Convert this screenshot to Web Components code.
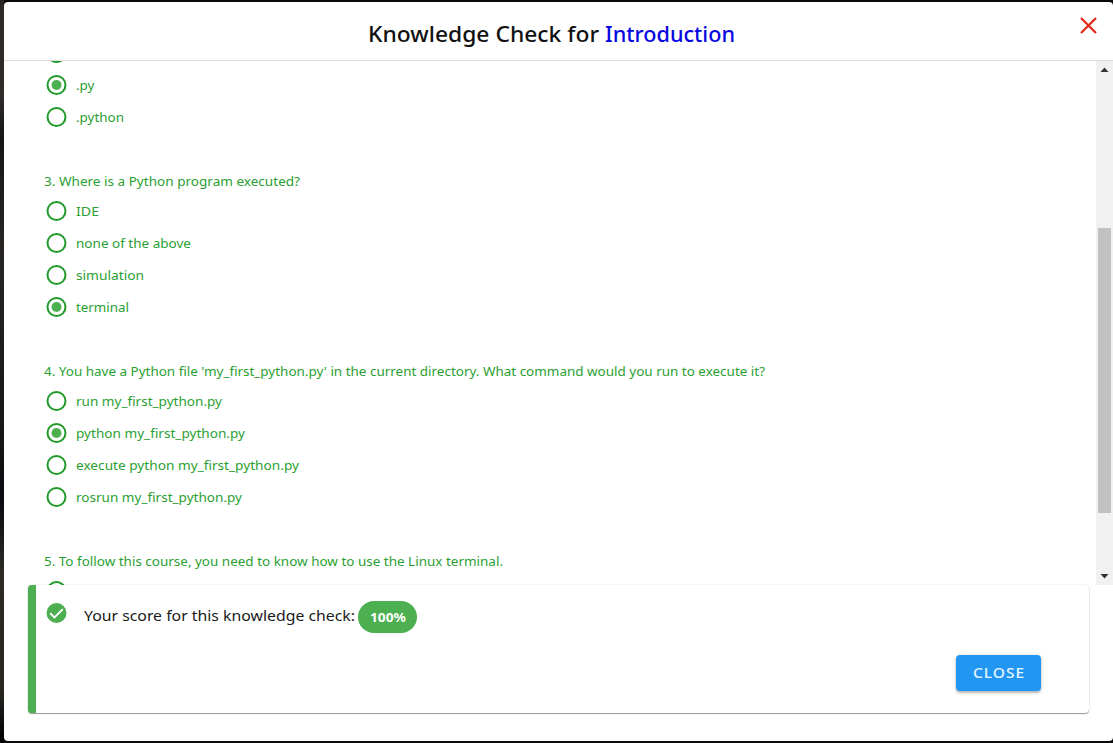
<!DOCTYPE html>
<html lang="en">
<head>
<meta charset="utf-8">
<title>Knowledge Check</title>
<style>
html, body { margin: 0; height: 100%; overflow: hidden; background: #0b0a0b; }
body { font-family: "Noto Sans", "Open Sans", sans-serif; }
</style>
</head>
<body>
<knowledge-dialog>
  <dialog-header slot="header"><fit-text w="237">Knowledge Check for </fit-text><fit-text w="130" style="color:#0808e2">Introduction</fit-text></dialog-header>
  <quiz-question>
    <quiz-option></quiz-option>
    <quiz-option checked><fit-text w="18.5">.py</fit-text></quiz-option>
    <quiz-option><fit-text w="48">.python</fit-text></quiz-option>
  </quiz-question>
  <quiz-question>
    <fit-text slot="title" w="256">3. Where is a Python program executed?</fit-text>
    <quiz-option><fit-text w="23">IDE</fit-text></quiz-option>
    <quiz-option><fit-text w="115">none of the above</fit-text></quiz-option>
    <quiz-option><fit-text w="68">simulation</fit-text></quiz-option>
    <quiz-option checked><fit-text w="53">terminal</fit-text></quiz-option>
  </quiz-question>
  <quiz-question>
    <fit-text slot="title" w="721">4. You have a Python file 'my_first_python.py' in the current directory. What command would you run to execute it?</fit-text>
    <quiz-option><fit-text w="146">run my_first_python.py</fit-text></quiz-option>
    <quiz-option checked><fit-text w="169">python my_first_python.py</fit-text></quiz-option>
    <quiz-option><fit-text w="223">execute python my_first_python.py</fit-text></quiz-option>
    <quiz-option><fit-text w="166">rosrun my_first_python.py</fit-text></quiz-option>
  </quiz-question>
  <quiz-question>
    <fit-text slot="title" w="459">5. To follow this course, you need to know how to use the Linux terminal.</fit-text>
    <quiz-option></quiz-option>
  </quiz-question>
  <score-card slot="footer">
    <fit-text w="271">Your score for this knowledge check:</fit-text>
    <fit-text slot="score" w="36">100%</fit-text>
    <action-button slot="action"><fit-text w="52">CLOSE</fit-text></action-button>
  </score-card>
</knowledge-dialog>
<script>
const define = (name, html, Base = HTMLElement) => {
  const template = document.createElement('template');
  template.innerHTML = html;
  customElements.define(name, class extends Base {
    constructor() {
      super();
      this.attachShadow({ mode: 'open' }).append(template.content.cloneNode(true));
    }
  });
};

define('knowledge-dialog', `
<style>
:host { display: block; box-sizing: border-box; height: 743px; padding: 2px 0 2px 4px; background: linear-gradient(90deg, transparent 4px, #0b0a0b 4px), linear-gradient(#2b2826 0, #302c2a 95px, #171615 135px, #282523 250px, #171716 430px, #080a10 500px, #2d2a26 570px, #292622 690px, #050505 735px); }
.panel { height: 739px; display: grid; grid-template-rows: 59px 524px 1fr; background: #fff; border-radius: 4px; overflow: hidden; }
.scroller { display: grid; grid-template-columns: 1fr 17px; overflow: hidden; min-height: 0; }
.content { overflow: hidden; padding-left: 40px; min-height: 0; }
.list { margin-top: -24px; display: flex; flex-direction: column; gap: 34px; }
.foot { padding: 0 24px; }
</style>
<div class="panel">
  <slot name="header"></slot>
  <div class="scroller"><div class="content"><div class="list"><slot></slot></div></div><scroll-rail></scroll-rail></div>
  <div class="foot"><slot name="footer"></slot></div>
</div>`);

define('dialog-header', `
<style>
:host { display: grid; grid-template-columns: 1fr auto 1fr; box-sizing: border-box; border-bottom: 1px solid #dedede; color: #111; font-size: 21px; font-weight: 500; }
.title { grid-column: 2; display: flex; white-space: pre; align-items: center; height: 63px; margin-left: -14px; }
svg { justify-self: end; margin: 14px 15px 0 0; }
</style>
<div class="title"><slot></slot></div>
<svg width="19" height="19" viewBox="0 0 19 19"><path d="M2 2 17 17M17 2 2 17" stroke="#e32b18" stroke-width="2.3" fill="none"/></svg>`);

define('scroll-rail', `
<style>
:host { display: grid; grid-template-rows: 17px 1fr 17px; background: #f1f1f1; justify-items: center; }
svg { display: block; }
.thumb { width: 13px; height: 285px; background: #c1c1c1; margin-top: 150px; }
</style>
<svg width="17" height="17"><path d="M4.5 11 8.5 6.5 12.5 11Z" fill="#333"/></svg>
<div class="thumb"></div>
<svg width="17" height="17"><path d="M4.5 6 8.5 10.5 12.5 6Z" fill="#333"/></svg>`);

define('quiz-question', `
<style>
:host { display: block; color: #2ba032; font-size: 12.8px; }
.title { display: flex; align-items: center; }
.title ::slotted(*) { line-height: 28px; }
</style>
<div class="title"><slot name="title"></slot></div><slot></slot>`);

define('quiz-option', `
<style>
:host { display: flex; align-items: center; height: 32px; gap: 9px; padding-left: 2px; }
svg { display: block; flex: none; }
.dot { display: none; }
:host([checked]) .dot { display: inline; }
</style>
<svg width="21" height="20" viewBox="0 0 21 20"><circle cx="10.5" cy="10" r="9" fill="none" stroke="#1f9a28" stroke-width="2"/><circle class="dot" cx="10.5" cy="10" r="5" fill="#4caf50"/></svg>
<slot></slot>`);

define('score-card', `
<style>
:host { display: grid; box-sizing: border-box; width: 1061px; height: 128px; grid-template-rows: 70px 1fr; border-left: 8px solid #4caf50; border-radius: 4px; background: #fff; box-shadow: 0 1px 1px rgba(0,0,0,.38), 0 0 2px rgba(0,0,0,.16); color: #1a1a1a; font-size: 15.3px; }
.row { display: flex; align-items: flex-start; padding-left: 10px; }
svg { margin: 18px 17px 0 0; flex: none; }
.message { line-height: 24px; margin-top: 18px; }
.chip { display: flex; align-items: center; justify-content: center; width: 59px; height: 32px; margin: 16px 0 0 3px; border-radius: 16px; background: #4caf50; color: #fff; font-size: 13px; font-weight: 700; }
.actions { display: flex; justify-content: flex-end; align-items: flex-start; padding-right: 48px; }
</style>
<div class="row">
<svg width="21" height="20" viewBox="0 0 21 20"><circle cx="10.5" cy="10" r="10" fill="#4caf50"/><path d="M4.2 10.3 8.5 14.4 16.8 6.1" fill="none" stroke="#fff" stroke-width="1.9"/></svg>
<div class="message"><slot></slot></div><div class="chip"><slot name="score"></slot></div>
</div>
<div class="actions"><slot name="action"></slot></div>`);

define('action-button', `
<style>
:host { display: block; }
button { display: flex; align-items: center; justify-content: center; width: 85px; height: 36px; padding: 0 0 1px; border: 0; border-radius: 4px; background: #2196f3; color: #e6f6ff; font: 500 13.5px "Noto Sans", sans-serif; letter-spacing: 0.8px; box-shadow: 0 2px 2px rgba(0,0,0,.2), 0 1px 4px rgba(0,0,0,.16); }
</style>
<button><slot></slot></button>`);

/* Text run whose glyphs are stretched horizontally to the width in "w". */
customElements.define('fit-text', class extends HTMLElement {
  constructor() {
    super();
    this.attachShadow({ mode: 'open' }).innerHTML =
      '<style>:host{display:inline-block;white-space:pre;text-align:left}span{display:inline-block;transform-origin:0 50%}</style><span><slot></slot></span>';
  }
  connectedCallback() {
    const span = this.shadowRoot.querySelector('span');
    const target = Number(this.getAttribute('w'));
    const width = span.getBoundingClientRect().width;
    this.style.width = target + 'px';
    span.style.transform = `scaleX(${target / width})`;
  }
});
</script>
</body>
</html>
